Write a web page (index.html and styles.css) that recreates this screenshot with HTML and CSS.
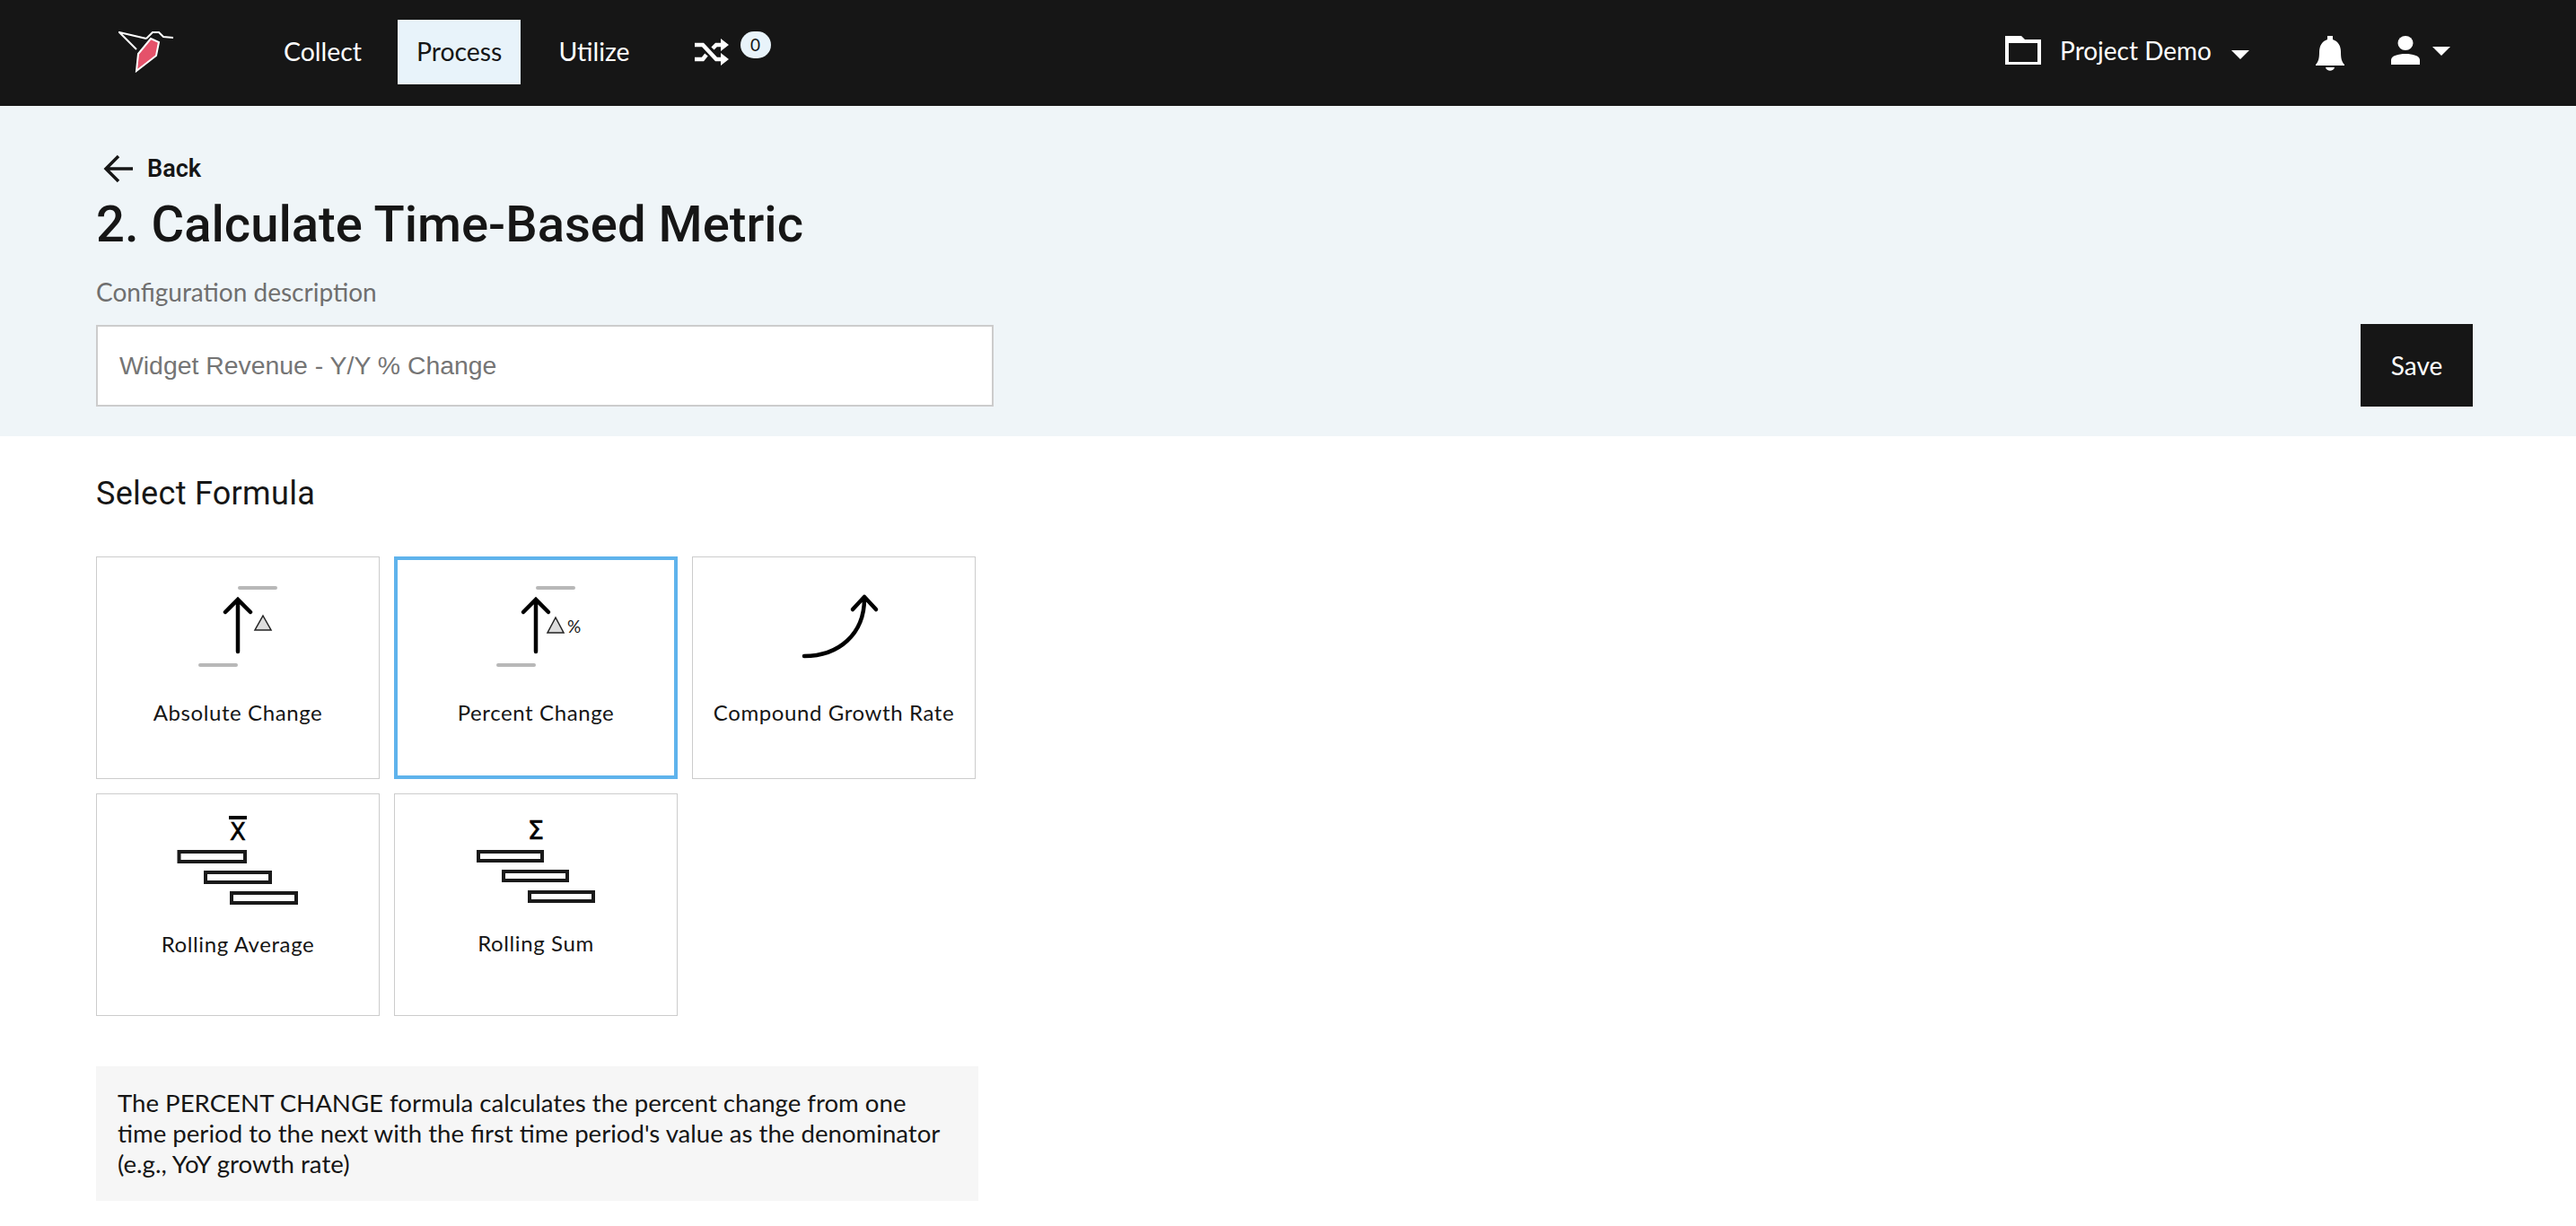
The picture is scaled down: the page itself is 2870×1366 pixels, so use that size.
FILE: index.html
```html
<!DOCTYPE html>
<html lang="en">
<head>
    <meta charset="UTF-8">
    <title>Calculate Time-Based Metric</title>
    <link rel="stylesheet" href="styles.css">
</head>
<body>
    <header class="topbar">
        <svg class="logo" width="62" height="46" viewBox="132 35 62 46">
            <path d="M163 43L133 36L152 55M163 43L170 36H177L182 41L193 42" fill="none" stroke="#fff" stroke-width="2"/>
            <path d="M168 43L177 47L174 62L152 79L154 60Z" fill="#e5526a" stroke="#fff" stroke-width="2"/>
        </svg>
        <nav class="nav">
            <a class="nav-item">Collect</a>
            <a class="nav-item active">Process</a>
            <a class="nav-item">Utilize</a>
        </nav>
        <div class="flows">
            <svg width="38" height="30" viewBox="0 0 38 30">
                <path d="M0 7H9L24 23H31M0 23H9L13 18M20 11L24 7H31" fill="none" stroke="#fff" stroke-width="4.5"/>
                <path d="M29 0L38 7L29 14ZM29 16L38 23L29 30Z" fill="#fff"/>
            </svg>
            <span class="badge">0</span>
        </div>
        <div class="topbar-right">
            <svg class="folder" width="40" height="32" viewBox="0 0 40 32">
                <path d="M0 0H18L22 4H40V32H0ZM4 8V29H36V8Z" fill="#fff" fill-rule="evenodd"/>
            </svg>
            <span class="project">Project Demo</span>
            <span class="caret project-caret"></span>
            <svg class="bell" width="32" height="39" viewBox="0 0 32 39">
                <path d="M13 0H19V4C25 6 28 11 28 18C28 25 29 29 32 32V33H0V32C3 29 4 25 4 18C4 11 7 6 13 4ZM11 35H21C20 40 12 40 11 35Z" fill="#fff"/>
            </svg>
            <svg class="person" width="32" height="32" viewBox="0 0 32 32">
                <ellipse cx="16" cy="8" rx="8.5" ry="8" fill="#fff"/>
                <path d="M0 32V27C0 22 8 20 16 20C24 20 32 22 32 27V32Z" fill="#fff"/>
            </svg>
            <span class="caret person-caret"></span>
        </div>
    </header>

    <section class="config">
        <a class="back">
            <svg width="34" height="32" viewBox="0 0 34 32">
                <path d="M33 16H3M17 2L3 16L17 30" fill="none" stroke="#161616" stroke-width="3.5"/>
            </svg>
            <span>Back</span>
        </a>
        <h1>2. Calculate Time-Based Metric</h1>
        <div class="config-row">
            <div class="field">
                <label class="field-label" for="description">Configuration description</label>
                <input type="text" id="description" placeholder="Widget Revenue - Y/Y % Change">
            </div>
            <button class="save">Save</button>
        </div>
    </section>

    <main class="formula">
        <h2>Select Formula</h2>
        <div class="cards">
            <div class="card">
                <svg class="card-icon" width="120" height="100" viewBox="0 0 120 100">
                    <path d="M62 10H102" stroke="#b8b8b8" stroke-width="4" stroke-linecap="round"/>
                    <path d="M18 96H58" stroke="#b8b8b8" stroke-width="4" stroke-linecap="round"/>
                    <path d="M60 81V24M46 37L60 23L74 37" fill="none" stroke="#000" stroke-width="4.5" stroke-linecap="round"/>
                    <path d="M88 41L97 57H79Z" fill="#ddd" stroke="#222" stroke-width="1.5"/>
                </svg>
                <div class="card-label">Absolute Change</div>
            </div>
            <div class="card selected">
                <svg class="card-icon" width="120" height="100" viewBox="0 0 120 100">
                    <path d="M62 10H102" stroke="#b8b8b8" stroke-width="4" stroke-linecap="round"/>
                    <path d="M18 96H58" stroke="#b8b8b8" stroke-width="4" stroke-linecap="round"/>
                    <path d="M60 81V24M46 37L60 23L74 37" fill="none" stroke="#000" stroke-width="4.5" stroke-linecap="round"/>
                    <path d="M82 43L91 60H73Z" fill="#ddd" stroke="#222" stroke-width="1.5"/>
                    <text class="icon-percent" x="95" y="60">%</text>
                </svg>
                <div class="card-label">Percent Change</div>
            </div>
            <div class="card">
                <svg class="card-icon" width="120" height="100" viewBox="0 0 120 100">
                    <path d="M27 86C65 86 94 62 94 22M81 34L94 20L107 34" fill="none" stroke="#000" stroke-width="4.5" stroke-linecap="round" stroke-linejoin="round"/>
                </svg>
                <div class="card-label">Compound Growth Rate</div>
            </div>
            <div class="card rolling">
                <svg class="card-icon" width="160" height="104" viewBox="0 0 160 104">
                    <rect x="70" y="1" width="20" height="4" fill="#000"/>
                    <text class="icon-symbol" x="80" y="28">X</text>
                    <rect x="14.5" y="41" width="73.5" height="11" fill="#fff" stroke="#1a1a1a" stroke-width="4"/>
                    <rect x="44" y="64" width="72" height="11" fill="#fff" stroke="#1a1a1a" stroke-width="4"/>
                    <rect x="73" y="87" width="72" height="11" fill="#fff" stroke="#1a1a1a" stroke-width="4"/>
                </svg>
                <div class="card-label">Rolling Average</div>
            </div>
            <div class="card rolling sum">
                <svg class="card-icon" width="160" height="104" viewBox="0 0 160 104">
                    <text class="icon-symbol sigma" x="80" y="27">Σ</text>
                    <rect x="16" y="41" width="71" height="10" fill="#fff" stroke="#1a1a1a" stroke-width="4"/>
                    <rect x="44" y="63" width="71" height="10" fill="#fff" stroke="#1a1a1a" stroke-width="4"/>
                    <rect x="73" y="86" width="71" height="10" fill="#fff" stroke="#1a1a1a" stroke-width="4"/>
                </svg>
                <div class="card-label">Rolling Sum</div>
            </div>
        </div>
        <p class="hint">The PERCENT CHANGE formula calculates the percent change from one time period to the next with the first time period's value as the denominator (e.g., YoY growth rate)</p>
    </main>
</body>
</html>
```

FILE: styles.css
```css
* {
    margin: 0;
    padding: 0;
    box-sizing: border-box;
}

body {
    background: #fff;
    color: #161616;
    font-family: 'Lato', sans-serif;
}

.topbar {
    height: 118px;
    background: #161616;
    display: flex;
    align-items: center;
    padding-left: 132px;
    padding-right: 140px;
}

.logo {
    display: block;
    margin-bottom: 2px;
}

.nav {
    display: flex;
    margin-left: 101px;
    margin-bottom: 2px;
    gap: 19px;
}

.nav-item {
    height: 72px;
    padding: 0 21px 2px;
    display: flex;
    align-items: center;
    color: #fff;
    font-size: 28.4px;
}

.nav-item.active {
    background: #e8f3fa;
    color: #161616;
    margin-right: 2px;
}

.flows {
    display: flex;
    align-items: flex-start;
    margin-left: 51px;
    margin-bottom: 12px;
    height: 37px;
    gap: 13px;
}

.flows svg {
    margin-top: 8px;
}

.badge {
    width: 34px;
    height: 30px;
    border-radius: 15px;
    background: #e8f3fa;
    color: #161616;
    font-size: 19px;
    text-align: center;
    line-height: 30px;
}

.topbar-right {
    margin-left: auto;
    display: flex;
    align-items: center;
    padding-bottom: 6px;
}

.project {
    margin-left: 21px;
    color: #fff;
    font-size: 28px;
}

.caret {
    width: 0;
    height: 0;
    border-left: 10px solid transparent;
    border-right: 10px solid transparent;
    border-top: 10px solid #fff;
}

.project-caret {
    margin-left: 22px;
    margin-top: 10px;
}

.person-caret {
    margin-left: 14px;
    margin-top: 2px;
}

.bell {
    margin-left: 74px;
    margin-top: 6px;
}

.person {
    margin-left: 52px;
}

.config {
    height: 368px;
    background: #eff5f8;
    padding: 54px 115px 33px 107px;
}

.back {
    display: flex;
    align-items: center;
    gap: 15px;
    margin-left: 8px;
    height: 32px;
    font-family: 'Roboto', sans-serif;
    font-weight: 600;
    font-size: 27px;
}

.config h1 {
    font-family: 'Roboto', sans-serif;
    font-weight: 500;
    font-size: 56.2px;
    line-height: 70px;
    margin-top: 11px;
}

.config-row {
    display: flex;
    justify-content: space-between;
    align-items: flex-end;
    margin-top: 23px;
}

.field-label {
    display: block;
    color: #6f6f6f;
    font-size: 28px;
    line-height: 34px;
    margin-bottom: 20px;
}

.field input {
    display: block;
    width: 1000px;
    height: 91px;
    background: #fff;
    border: 2px solid #ccc;
    padding: 0 24px;
    font-family: 'Liberation Sans', sans-serif;
    font-size: 28.4px;
}

.field input::placeholder {
    color: #757575;
    opacity: 1;
}

.save {
    width: 125px;
    height: 92px;
    background: #161616;
    color: #fff;
    border: none;
    font-family: 'Lato', sans-serif;
    font-size: 28px;
}

.formula {
    padding: 44px 0 0 107px;
}

.formula h2 {
    font-family: 'Roboto', sans-serif;
    font-weight: 400;
    font-size: 36px;
    letter-spacing: 0.3px;
    line-height: 40px;
}

.cards {
    display: grid;
    grid-template-columns: repeat(3, 316px);
    grid-auto-rows: 248px;
    gap: 16px;
    margin-top: 50px;
}

.card {
    border: 1px solid #ccc;
    background: #fff;
    padding-top: 24px;
    text-align: center;
}

.card.selected {
    border: 4px solid #5fb3ec;
    padding-top: 21px;
}

.card.rolling {
    padding-top: 23px;
}

.card-icon {
    display: block;
    margin: 0 auto;
}

.card-label {
    font-size: 24px;
    line-height: 30px;
    letter-spacing: 0.6px;
    margin-top: 34px;
}

.rolling .card-label {
    margin-top: 25px;
}

.sum .card-label {
    margin-top: 24px;
}

.icon-symbol {
    font-family: 'DejaVu Sans', sans-serif;
    font-size: 26px;
    text-anchor: middle;
    fill: #000;
    stroke: #000;
    stroke-width: 0.6px;
}

.sigma {
    font-size: 29px;
}

.icon-percent {
    font-family: 'Lato', sans-serif;
    font-size: 19px;
    fill: #161616;
}

.hint {
    width: 983px;
    height: 150px;
    margin-top: 56px;
    padding: 24px 24px;
    background: #f6f6f6;
    font-size: 27.6px;
    line-height: 34px;
}
```
